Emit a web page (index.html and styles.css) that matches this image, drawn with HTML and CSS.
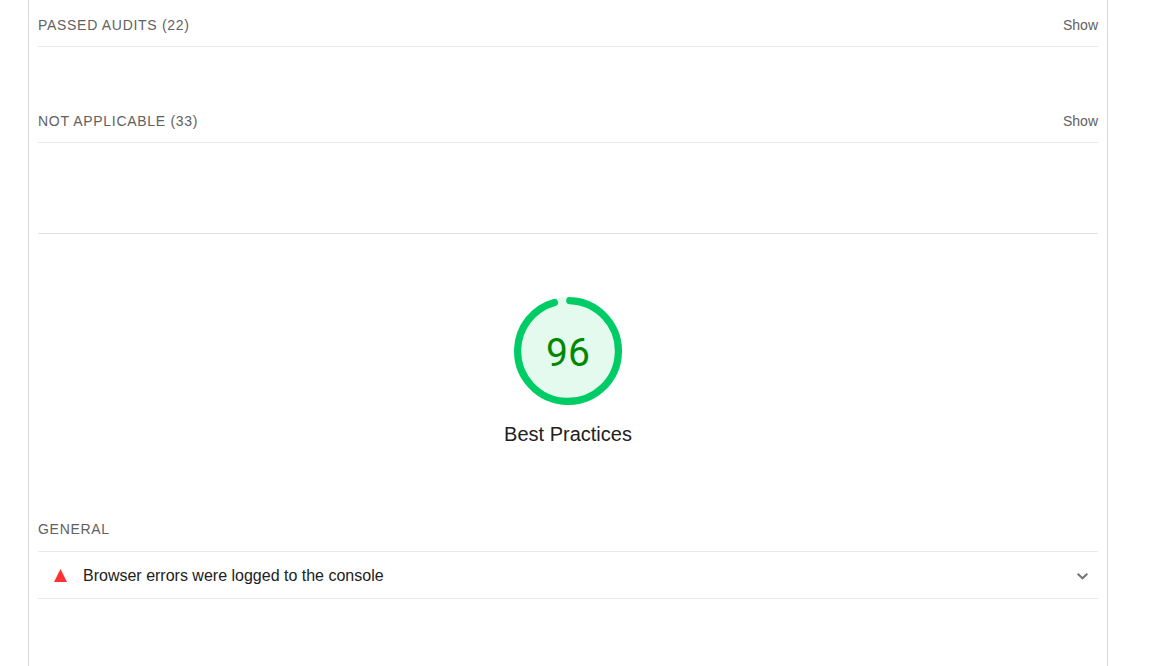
FILE: index.html
```
<!DOCTYPE html>
<html lang="en">
<head>
<meta charset="utf-8">
<title>Lighthouse Report</title>
<link rel="stylesheet" href="styles.css">
</head>
<body>
<main class="report">
  <section class="category">
    <details class="clump">
      <summary class="clump-header"><span class="group-title">PASSED AUDITS (22)</span><span class="toggle">Show</span></summary>
    </details>
    <details class="clump">
      <summary class="clump-header"><span class="group-title">NOT APPLICABLE (33)</span><span class="toggle">Show</span></summary>
    </details>
  </section>
  <section class="category category-next">
    <a class="gauge-link" href="#best-practices">
      <span class="gauge">
        <svg class="gauge-svg" viewBox="0 0 120 120" aria-hidden="true">
          <circle class="gauge-base" cx="60" cy="60" r="56"/>
          <circle class="gauge-arc" cx="60" cy="60" r="56" pathLength="1000" stroke-dasharray="951 49" transform="rotate(-88 60 60)"/>
        </svg>
        <span class="gauge-score">96</span>
      </span>
      <span class="gauge-label">Best Practices</span>
    </a>
    <h2 class="group-title group-header">GENERAL</h2>
    <details class="audit">
      <summary class="audit-header">
        <svg class="fail-icon" viewBox="0 0 13 15" aria-hidden="true"><path d="M6.500 0L13 13H0z"/></svg>
        <span class="audit-title">Browser errors were logged to the console</span>
        <svg class="chevron" viewBox="0 0 12 12" aria-hidden="true"><path d="M1.700 3.700L6.500 8.300L11.300 3.700"/></svg>
      </summary>
    </details>
  </section>
</main>
</body>
</html>
```
FILE: styles.css
```
body {
  margin: 0;
  background: #fff;
  color: #212121;
  font: 16px/24px "Liberation Sans", Arial, sans-serif;
}
.report {
  box-sizing: border-box;
  min-height: 100vh;
  margin: 0 42px 0 28px;
  padding: 0 9px;
  border: solid #d8d8d8;
  border-width: 0 1px;
}
summary {
  display: flex;
  align-items: center;
  list-style: none;
  cursor: pointer;
}
.category {
  padding: 13px 0 90px;
}
.clump + .clump {
  margin-top: 62px;
}
.clump-header {
  justify-content: space-between;
  padding-bottom: 9px;
  border-bottom: 1px solid #ebebeb;
}
.group-title {
  color: #616161;
  font-size: 14px;
  font-weight: 400;
  letter-spacing: 0.05em;
}
.toggle {
  color: #616161;
  font-size: 14px;
}
.category-next {
  padding: 63px 0;
  border-top: 1px solid #e0e0e0;
}
.gauge-link {
  display: flex;
  flex-direction: column;
  align-items: center;
  gap: 17px;
  width: fit-content;
  margin: 0 auto;
  color: inherit;
  text-decoration: none;
}
.gauge {
  display: grid;
  place-items: center;
}
.gauge-svg,
.gauge-score {
  grid-area: 1 / 1;
}
.gauge-svg {
  width: 108px;
  height: 108px;
}
.gauge-base {
  fill: #e5faef;
  stroke: #e5faef;
  stroke-width: 8;
}
.gauge-arc {
  fill: none;
  stroke: #0c6;
  stroke-width: 8;
  stroke-linecap: round;
}
.gauge-score {
  padding-top: 4px;
  color: #080;
  font: 39px/48px Roboto, sans-serif;
}
.gauge-label {
  font-size: 20px;
}
.group-header {
  margin: 71px 0 10px;
}
.audit {
  border: solid #ebebeb;
  border-width: 1px 0;
}
.audit-header {
  padding: 12px 10px 10px 16px;
}
.fail-icon {
  width: 13px;
  height: 15px;
  fill: #f33;
}
.audit-title {
  flex: 1;
  margin-left: 16px;
}
.chevron {
  width: 12px;
  height: 12px;
  fill: none;
  stroke: #757575;
  stroke-width: 2;
}
```
